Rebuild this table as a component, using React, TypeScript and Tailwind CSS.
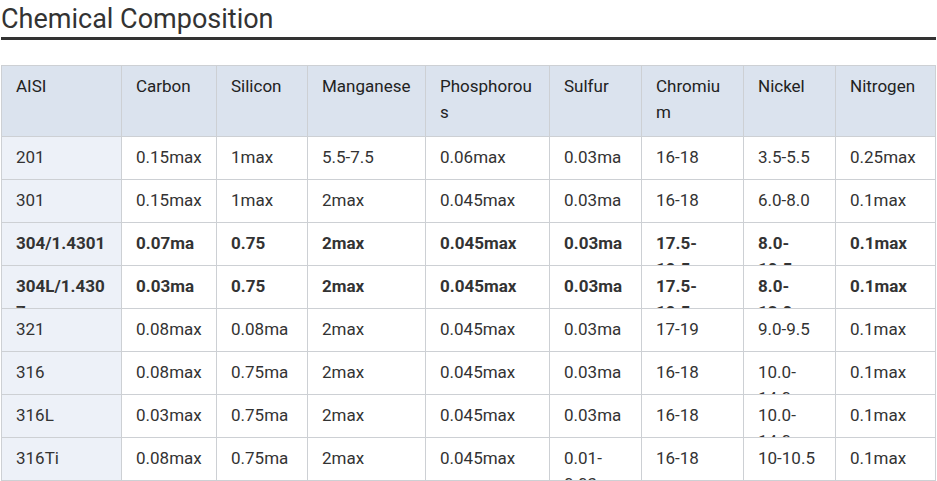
const headers = [
  "AISI",
  "Carbon",
  "Silicon",
  "Manganese",
  "Phosphorous",
  "Sulfur",
  "Chromium",
  "Nickel",
  "Nitrogen",
];

const rows: { cells: string[]; bold?: boolean }[] = [
  { cells: ["201", "0.15max", "1max", "5.5-7.5", "0.06max", "0.03max", "16-18", "3.5-5.5", "0.25max"] },
  { cells: ["301", "0.15max", "1max", "2max", "0.045max", "0.03max", "16-18", "6.0-8.0", "0.1max"] },
  { cells: ["304/1.4301", "0.07max", "0.75", "2max", "0.045max", "0.03max", "17.5-19.5", "8.0-10.5", "0.1max"], bold: true },
  { cells: ["304L/1.4307", "0.03max", "0.75", "2max", "0.045max", "0.03max", "17.5-19.5", "8.0-12.0", "0.1max"], bold: true },
  { cells: ["321", "0.08max", "0.08max", "2max", "0.045max", "0.03max", "17-19", "9.0-9.5", "0.1max"] },
  { cells: ["316", "0.08max", "0.75max", "2max", "0.045max", "0.03max", "16-18", "10.0-14.0", "0.1max"] },
  { cells: ["316L", "0.03max", "0.75max", "2max", "0.045max", "0.03max", "16-18", "10.0-14.0", "0.1max"] },
  { cells: ["316Ti", "0.08max", "0.75max", "2max", "0.045max", "0.01-0.03", "16-18", "10-10.5", "0.1max"] },
];

export default function App() {
  return (
    <div className="min-h-screen bg-white px-[1px] font-['Roboto',sans-serif]">
      <h2 className="border-b-[3px] border-[#333] pt-[4px] pb-[2px] text-[27px] leading-[31px] text-[#333]">
        Chemical Composition
      </h2>

      <div className="mt-[25px] grid w-[935px] grid-cols-[119px_94px_90px_117px_123px_91px_101px_91px_99px] gap-px border border-[#cdd0d4] bg-[#cdd0d4] text-[17px] leading-[26px]">
        {headers.map((h) => (
          <div key={h} className="h-[70px] overflow-hidden break-words bg-[#dbe3ee] px-[14px] pt-[7px] text-[#222]">
            {h}
          </div>
        ))}
        {rows.map((row) =>
          row.cells.map((c, i) => (
            <div
              key={row.cells[0] + i}
              className={`h-[42px] overflow-hidden break-words px-[14px] pt-[7px] text-[#333] ${
                i === 0 ? "bg-[#edf1f8]" : "bg-white"
              } ${row.bold ? "font-bold text-[#222]" : ""}`}
            >
              {c}
            </div>
          ))
        )}
      </div>
    </div>
  );
}
